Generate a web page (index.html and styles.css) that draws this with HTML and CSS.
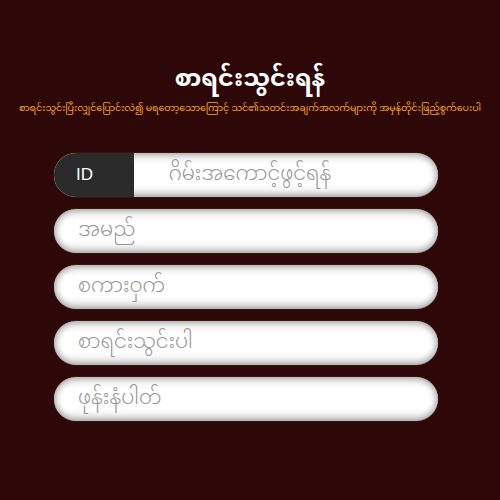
FILE: index.html
```html
<!DOCTYPE html>
<html lang="my">
<head>
<meta charset="utf-8">
<link rel="stylesheet" href="styles.css">
</head>
<body>
<main class="page">
  <h1 class="title">စာရင်းသွင်းရန်</h1>
  <p class="subtitle">စာရင်းသွင်းပြီးလျှင်ပြောင်းလဲ၍ မရတော့သောကြောင့် သင်၏သတင်းအချက်အလက်များကို အမှန်တိုင်းဖြည့်စွက်ပေးပါ</p>
  <form class="form">
    <div class="field field-id">
      <span class="id-label">ID</span>
      <span class="ph ph-center">ဂိမ်းအကောင့်ဖွင့်ရန်</span>
    </div>
    <div class="field"><span class="ph">အမည်</span></div>
    <div class="field"><span class="ph">စကားဝှက်</span></div>
    <div class="field"><span class="ph">စာရင်းသွင်းပါ</span></div>
    <div class="field"><span class="ph">ဖုန်းနံပါတ်</span></div>
  </form>
</main>
</body>
</html>
```
FILE: styles.css
```css
html, body {
  margin: 0;
  padding: 0;
  background: #2e0808;
  height: 100%;
}
body {
  font-family: "Noto Sans Myanmar", "Padauk", "Myanmar Text", "Noto Sans", "Liberation Sans", sans-serif;
}
.page {
  width: 500px;
  height: 500px;
  box-sizing: border-box;
  padding-top: 61px;
  display: flex;
  flex-direction: column;
  align-items: center;
}
.title {
  margin: 0;
  color: #ffffff;
  font-size: 24px;
  font-weight: 700;
  line-height: 40px;
}
.subtitle {
  margin: 0;
  color: #f3a32a;
  font-size: 9.5px;
  line-height: 16px;
  white-space: nowrap;
  letter-spacing: -0.1px;
}
.form {
  margin-top: 36px;
  display: flex;
  flex-direction: column;
  gap: 12px;
  width: 384px;
  margin-left: -8px;
}
.field {
  height: 44px;
  border-radius: 22px;
  background: linear-gradient(#f2f2f2, #ffffff 30%, #ffffff 72%, #e8e8e8);
  box-shadow: inset 0 0 6px 2px rgba(110,110,110,0.6), 0 0 1px rgba(255,255,255,0.5);
  display: flex;
  align-items: center;
  overflow: hidden;
  padding-left: 24px;
}
.field-id {
  padding-left: 0;
}
.id-label {
  width: 80px;
  height: 100%;
  background: #2b2b2b;
  color: #ffffff;
  font-family: "Liberation Sans", Arial, sans-serif;
  font-size: 17px;
  display: flex;
  align-items: center;
  padding-left: 22px;
  box-sizing: border-box;
  flex: none;
}
.ph {
  color: #959595;
  font-size: 20px;
  font-weight: 300;
}
.ph-center {
  flex: 1;
  text-align: center;
  margin-right: 72px;
}
```
